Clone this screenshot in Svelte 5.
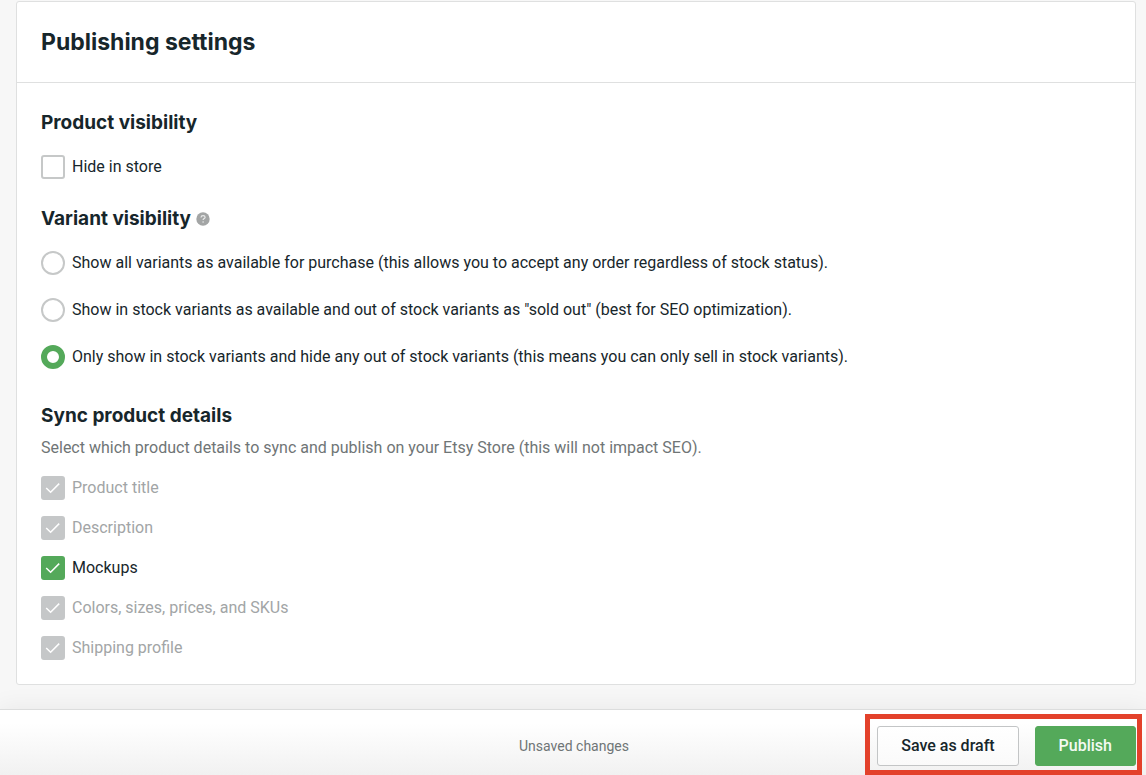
<script>
  let hidden = $state(false);
  let visibility = $state('in-stock');

  const variants = [
    { value: 'all', label: 'Show all variants as available for purchase (this allows you to accept any order regardless of stock status).' },
    { value: 'sold-out', label: 'Show in stock variants as available and out of stock variants as "sold out" (best for SEO optimization).' },
    { value: 'in-stock', label: 'Only show in stock variants and hide any out of stock variants (this means you can only sell in stock variants).' }
  ];

  let details = $state([
    { label: 'Product title', checked: true, locked: true },
    { label: 'Description', checked: true, locked: true },
    { label: 'Mockups', checked: true, locked: false },
    { label: 'Colors, sizes, prices, and SKUs', checked: true, locked: true },
    { label: 'Shipping profile', checked: true, locked: true }
  ]);
</script>

{#snippet tick()}
  <svg class="tick" viewBox="0 0 24 24" aria-hidden="true">
    <path d="M5.2 12l4.4 4.2L18.2 7.6" />
  </svg>
{/snippet}

<div class="page">
  <main>
    <section class="card">
      <header><h1>Publishing settings</h1></header>
      <div class="body">
        <h2>Product visibility</h2>
        <label class="option">
          <span class="box">
            <input type="checkbox" bind:checked={hidden} />
            {@render tick()}
          </span>
          <span>Hide in store</span>
        </label>

        <h2 class="variants">
          Variant visibility
          <svg class="help" viewBox="0 0 14 14" aria-hidden="true">
            <circle cx="7" cy="7" r="6.7" fill="#a3a5a5" />
            <path d="M5 5.5C5.1 4.2 6 3.6 7.1 3.6c1.2 0 2 .7 2 1.6 0 1.3-2 1.4-2 2.9" fill="none" stroke="#e9eaea" stroke-width="1.2" />
            <circle cx="7.1" cy="10" r=".8" fill="#e9eaea" />
          </svg>
        </h2>
        <div class="radios">
          {#each variants as item}
            <label class="option">
              <input type="radio" name="visibility" value={item.value} bind:group={visibility} />
              <span>{item.label}</span>
            </label>
          {/each}
        </div>

        <h2 class="sync">Sync product details</h2>
        <p>Select which product details to sync and publish on your Etsy Store (this will not impact SEO).</p>
        <div class="checks">
          {#each details as item}
            <label class="option" class:locked={item.locked}>
              <span class="box">
                <input type="checkbox" bind:checked={item.checked} disabled={item.locked} />
                {@render tick()}
              </span>
              <span>{item.label}</span>
            </label>
          {/each}
        </div>
      </div>
    </section>
  </main>

  <footer>
    <span class="status">Unsaved changes</span>
    <div class="actions">
      <button type="button">Save as draft</button>
      <button type="button" class="primary">Publish</button>
    </div>
  </footer>
</div>

<style>
  :global(body) {
    margin: 0;
    background: #f7f7f7;
  }
  .page {
    display: flex;
    flex-direction: column;
    min-height: 100vh;
    font: 16px/24px Roboto, sans-serif;
    color: #17262b;
  }
  main {
    flex: 1;
    padding: 1px 10px 24px 16px;
  }
  .card {
    background: #fff;
    border: 1px solid #dfe0e0;
    border-radius: 3px;
  }
  header {
    padding: 24px;
    border-bottom: 1px solid #dfe0e0;
  }
  h1,
  h2 {
    margin: 0;
    font-family: Inter, sans-serif;
    font-weight: 700;
    color: #17262b;
  }
  h1 {
    font-size: 23px;
    line-height: 32px;
  }
  h2 {
    margin-bottom: 20px;
    font-size: 19px;
    line-height: 24px;
  }
  .body {
    padding: 28px 24px 24px;
  }
  .variants {
    display: flex;
    align-items: center;
    gap: 5px;
    margin-top: 28px;
  }
  .help {
    width: 14px;
    height: 14px;
  }
  .sync {
    margin: 35px 0 8px;
  }
  p {
    margin: 0 0 16px;
    color: #6f7576;
  }
  .option {
    display: flex;
    align-items: center;
    gap: 7px;
  }
  .radios,
  .checks {
    display: grid;
    gap: 23px;
  }
  .checks {
    gap: 16px;
  }
  .box {
    display: grid;
    flex: none;
  }
  .box > :global(*) {
    grid-area: 1 / 1;
  }
  input {
    appearance: none;
    box-sizing: border-box;
    flex: none;
    width: 24px;
    height: 24px;
    margin: 0;
    border: 2px solid #c6c8c8;
    border-radius: 3px;
    background: #fff;
  }
  input[type='radio'] {
    border-radius: 50%;
  }
  input[type='radio']:checked {
    border: 6px solid #54a95a;
  }
  input[type='checkbox']:checked {
    border-color: #54a95a;
    background: #54a95a;
  }
  input[type='checkbox']:disabled {
    border-color: #c5c7c8;
    background: #c5c7c8;
  }
  .tick {
    width: 24px;
    height: 24px;
    fill: none;
    stroke: #fff;
    stroke-width: 1.5;
    pointer-events: none;
  }
  .locked {
    color: #a2a5a6;
  }
  footer {
    position: sticky;
    bottom: 0;
    display: grid;
    grid-template-columns: 1fr auto 1fr;
    align-items: center;
    padding: 16px 10px 9px 12px;
    border-top: 1px solid #dcdddd;
    background: linear-gradient(#fff 20%, #f1f1f1);
    box-shadow: 0 0 24px 2px rgb(0 0 0 / 6%);
  }
  .status {
    grid-column: 2;
    font-size: 14px;
    color: #6f7576;
  }
  .actions {
    position: relative;
    display: flex;
    gap: 16px;
    justify-self: end;
  }
  .actions::after {
    content: '';
    position: absolute;
    inset: -12px -6px -9px -12px;
    border: 5px solid #e3412b;
    pointer-events: none;
  }
  button {
    height: 40px;
    padding: 0 23px;
    border: 1px solid #c3c5c6;
    border-radius: 3px;
    background: linear-gradient(#fff, #fafafa);
    font: 500 16px/24px Roboto, sans-serif;
    color: #17262b;
  }
  .primary {
    border-color: #54a95a;
    background: #54a95a;
    color: #f3faf3;
  }
</style>
